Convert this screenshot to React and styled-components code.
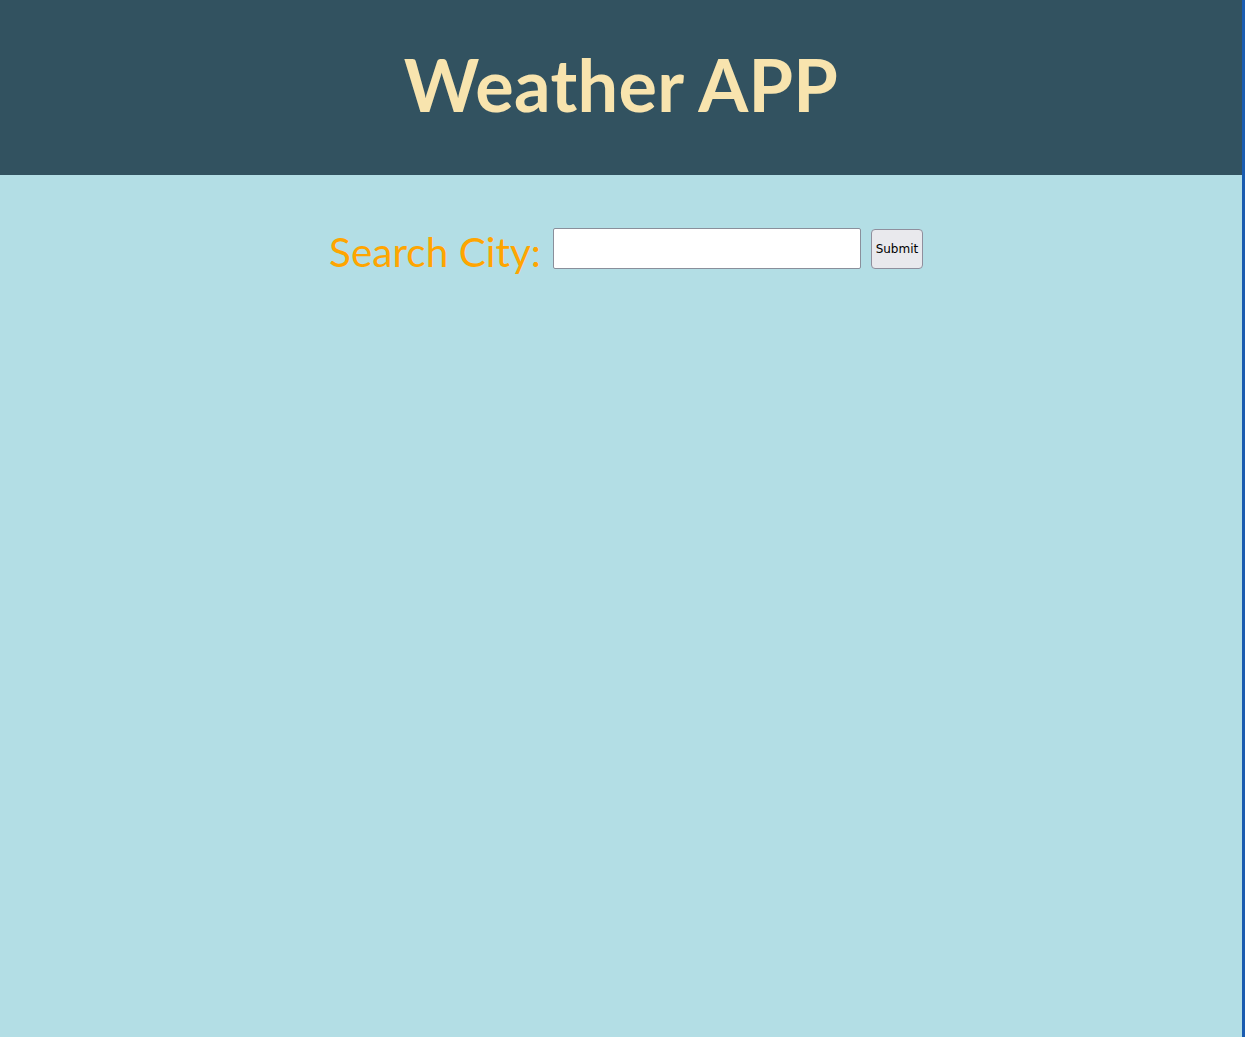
import React, { useState } from "react";
import styled, { createGlobalStyle } from "styled-components";

const GlobalStyle = createGlobalStyle`
  html, body {
    margin: 0;
    padding: 0;
    height: 100%;
  }
  body {
    background: #0b1a33;
  }
  #root {
    height: 100%;
  }
`;

const App = () => {
  const [city, setCity] = useState("");

  return (
    <Page>
      <GlobalStyle />
      <Header>
        <Title>Weather APP</Title>
      </Header>
      <Main>
        <SearchForm onSubmit={(e) => e.preventDefault()}>
          <SearchLabel htmlFor="city">Search City:</SearchLabel>
          <CityInput
            id="city"
            value={city}
            onChange={(e) => setCity(e.target.value)}
          />
          <SubmitButton type="submit">Submit</SubmitButton>
        </SearchForm>
      </Main>
    </Page>
  );
};

const Page = styled.div`
  display: flex;
  flex-direction: column;
  height: 100%;
  min-height: 1037px;
  box-sizing: border-box;
  border-right: 3px solid;
  border-image: linear-gradient(to right, #0a1424 34%, #1a5cb0 34%) 1;
`;

const Header = styled.header`
  background: #325260;
  height: 175px;
  display: flex;
  justify-content: center;
  align-items: center;
`;

const Title = styled.h1`
  margin: 0;
  padding-bottom: 8px;
  font-family: "Lato", "Open Sans", sans-serif;
  font-weight: 700;
  font-size: 72px;
  letter-spacing: 0.3px;
  color: #f8e4ae;
`;

const Main = styled.main`
  flex: 1;
  background: #b3dee5;
  padding-top: 53px;
`;

const SearchForm = styled.form`
  display: flex;
  justify-content: center;
  align-items: flex-start;
  gap: 10px;
  padding-left: 10px;
`;

const SearchLabel = styled.label`
  font-family: "Lato", "Open Sans", sans-serif;
  font-size: 40.5px;
  color: #ffa500;
  line-height: 46px;
  margin-top: 1px;
  margin-right: 2px;
`;

const CityInput = styled.input`
  width: 308px;
  height: 41px;
  box-sizing: border-box;
  border: 1px solid #8a8f9b;
  border-radius: 2px;
  background: #ffffff;
  padding: 0 6px;
  font-size: 16px;
`;

const SubmitButton = styled.button`
  height: 40px;
  width: 52px;
  box-sizing: border-box;
  padding: 0;
  margin-top: 1px;
  border: 1px solid #8f8f9d;
  border-radius: 4px;
  background: #e9e9ed;
  color: #000000;
  font-family: "DejaVu Sans", sans-serif;
  font-size: 12px;
  cursor: pointer;
`;

export default App;
